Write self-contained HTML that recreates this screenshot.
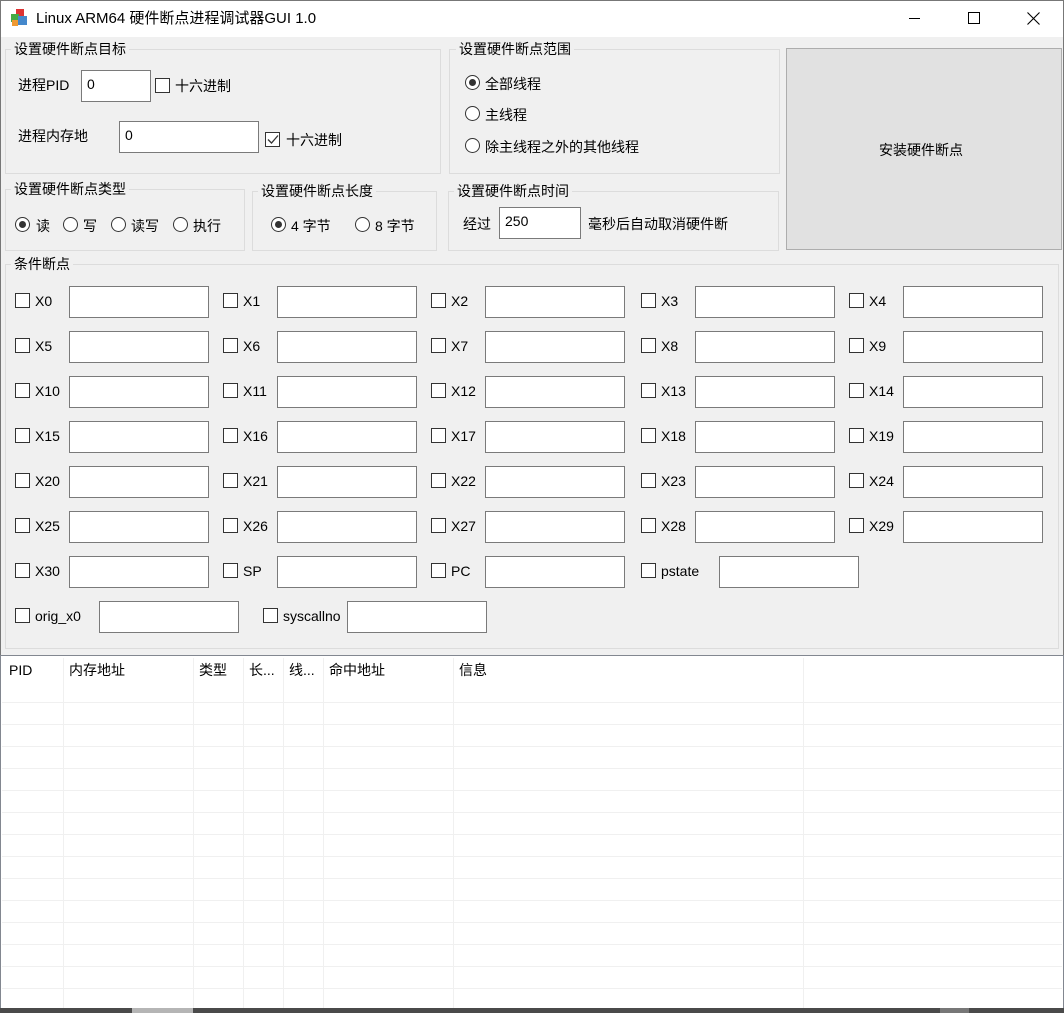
<!DOCTYPE html>
<html><head><meta charset="utf-8"><style>
*{box-sizing:border-box;margin:0;padding:0}
body{width:1064px;height:1013px;background:#f0f0f0;font-family:"Liberation Sans","Noto Sans CJK SC",sans-serif;font-size:14px;color:#000;position:relative;overflow:hidden}
.a{position:absolute;white-space:nowrap;line-height:18px}
.g{position:absolute;border:1px solid #dcdcdc}
.gl{position:absolute;background:#f0f0f0;padding:0 3px;line-height:18px;white-space:nowrap}
.in{position:absolute;background:#fff;border:1px solid #7a7a7a;height:32px;width:140px;padding:4px 5px 0;line-height:18px}
.cb{position:absolute;width:15px;height:15px;border:1px solid #333;background:#fff}
.rb{position:absolute;width:15px;height:15px;border:1px solid #333;border-radius:50%;background:#fff}
.rb.on::after{content:"";position:absolute;left:3px;top:3px;width:7px;height:7px;border-radius:50%;background:#333}
.vl{position:absolute;top:658px;bottom:5px;width:1px;background:#f0f0f0}
.hl{position:absolute;left:2px;right:2px;height:1px;background:#f0f0f0}
</style></head><body>
<div style="position:absolute;left:0;top:0;width:1064px;height:37px;background:#fff;border:1px solid #777;border-bottom:none"></div>
<svg class="a" style="left:10px;top:8px" width="19" height="20" viewBox="0 0 19 20"><rect x="6" y="1" width="8" height="8" fill="#d33"/><rect x="1" y="6" width="8" height="8" fill="#4a4"/><rect x="8" y="8" width="9" height="9" fill="#48c"/><rect x="2" y="12" width="6" height="6" fill="#e93"/></svg>
<div class="a" style="left:36px;top:10px;font-size:15px">Linux ARM64 硬件断点进程调试器GUI 1.0</div>
<div class="a" style="left:909px;top:18px;width:11px;height:1px;background:#000"></div>
<div class="a" style="left:968px;top:12px;width:12px;height:12px;border:1px solid #000"></div>
<svg class="a" style="left:1027px;top:12px" width="13" height="13"><path d="M0.5 0.5L12.5 12.5M12.5 0.5L0.5 12.5" stroke="#000" stroke-width="1.1"/></svg>
<div style="position:absolute;left:0;top:37px;width:1px;height:976px;background:#777"></div>
<div style="position:absolute;right:0;top:37px;width:1px;height:976px;background:#777"></div>

<div class="g" style="left:5px;top:49px;width:436px;height:125px"></div><div class="gl" style="left:11px;top:40px">设置硬件断点目标</div>
<div class="a" style="left:18px;top:76px">进程PID</div>
<div class="in" style="left:81px;top:70px;width:70px">0</div>
<div class="cb" style="left:155px;top:78px"></div><div class="a" style="left:175px;top:77px">十六进制</div>
<div class="a" style="left:18px;top:127px">进程内存地</div>
<div class="in" style="left:119px;top:121px">0</div>
<div class="cb" style="left:265px;top:132px"></div>
<svg class="a" style="left:267px;top:134px" width="12" height="11"><path d="M1 5.5L4.5 9L11 1.5" stroke="#333" fill="none" stroke-width="1.3"/></svg>
<div class="a" style="left:286px;top:131px">十六进制</div>

<div class="g" style="left:449px;top:49px;width:331px;height:125px"></div><div class="gl" style="left:456px;top:40px">设置硬件断点范围</div>
<div class="rb on" style="left:465px;top:75px"></div><div class="a" style="left:485px;top:75px">全部线程</div>
<div class="rb" style="left:465px;top:106px"></div><div class="a" style="left:485px;top:106px">主线程</div>
<div class="rb" style="left:465px;top:138px"></div><div class="a" style="left:485px;top:138px">除主线程之外的其他线程</div>

<div style="position:absolute;left:786px;top:48px;width:276px;height:202px;background:#e1e1e1;border:1px solid #adadad"></div>
<div class="a" style="left:879px;top:141px">安装硬件断点</div>

<div class="g" style="left:5px;top:189px;width:240px;height:62px"></div><div class="gl" style="left:11px;top:180px">设置硬件断点类型</div>
<div class="rb on" style="left:15px;top:217px"></div><div class="a" style="left:36px;top:217px">读</div>
<div class="rb" style="left:63px;top:217px"></div><div class="a" style="left:83px;top:217px">写</div>
<div class="rb" style="left:111px;top:217px"></div><div class="a" style="left:131px;top:217px">读写</div>
<div class="rb" style="left:173px;top:217px"></div><div class="a" style="left:193px;top:217px">执行</div>

<div class="g" style="left:252px;top:191px;width:185px;height:60px"></div><div class="gl" style="left:258px;top:182px">设置硬件断点长度</div>
<div class="rb on" style="left:271px;top:217px"></div><div class="a" style="left:291px;top:217px">4 字节</div>
<div class="rb" style="left:355px;top:217px"></div><div class="a" style="left:375px;top:217px">8 字节</div>

<div class="g" style="left:448px;top:191px;width:331px;height:60px"></div><div class="gl" style="left:454px;top:182px">设置硬件断点时间</div>
<div class="a" style="left:463px;top:215px">经过</div>
<div class="in" style="left:499px;top:207px;width:82px">250</div>
<div class="a" style="left:588px;top:215px">毫秒后自动取消硬件断</div>

<div class="g" style="left:5px;top:264px;width:1054px;height:385px"></div><div class="gl" style="left:11px;top:255px">条件断点</div>

<div class="cb" style="left:15px;top:293px"></div><div class="a" style="left:35px;top:292px">X0</div><div class="in" style="left:69px;top:286px"></div>
<div class="cb" style="left:223px;top:293px"></div><div class="a" style="left:243px;top:292px">X1</div><div class="in" style="left:277px;top:286px"></div>
<div class="cb" style="left:431px;top:293px"></div><div class="a" style="left:451px;top:292px">X2</div><div class="in" style="left:485px;top:286px"></div>
<div class="cb" style="left:641px;top:293px"></div><div class="a" style="left:661px;top:292px">X3</div><div class="in" style="left:695px;top:286px"></div>
<div class="cb" style="left:849px;top:293px"></div><div class="a" style="left:869px;top:292px">X4</div><div class="in" style="left:903px;top:286px"></div>

<div class="cb" style="left:15px;top:338px"></div><div class="a" style="left:35px;top:337px">X5</div><div class="in" style="left:69px;top:331px"></div>
<div class="cb" style="left:223px;top:338px"></div><div class="a" style="left:243px;top:337px">X6</div><div class="in" style="left:277px;top:331px"></div>
<div class="cb" style="left:431px;top:338px"></div><div class="a" style="left:451px;top:337px">X7</div><div class="in" style="left:485px;top:331px"></div>
<div class="cb" style="left:641px;top:338px"></div><div class="a" style="left:661px;top:337px">X8</div><div class="in" style="left:695px;top:331px"></div>
<div class="cb" style="left:849px;top:338px"></div><div class="a" style="left:869px;top:337px">X9</div><div class="in" style="left:903px;top:331px"></div>

<div class="cb" style="left:15px;top:383px"></div><div class="a" style="left:35px;top:382px">X10</div><div class="in" style="left:69px;top:376px"></div>
<div class="cb" style="left:223px;top:383px"></div><div class="a" style="left:243px;top:382px">X11</div><div class="in" style="left:277px;top:376px"></div>
<div class="cb" style="left:431px;top:383px"></div><div class="a" style="left:451px;top:382px">X12</div><div class="in" style="left:485px;top:376px"></div>
<div class="cb" style="left:641px;top:383px"></div><div class="a" style="left:661px;top:382px">X13</div><div class="in" style="left:695px;top:376px"></div>
<div class="cb" style="left:849px;top:383px"></div><div class="a" style="left:869px;top:382px">X14</div><div class="in" style="left:903px;top:376px"></div>

<div class="cb" style="left:15px;top:428px"></div><div class="a" style="left:35px;top:427px">X15</div><div class="in" style="left:69px;top:421px"></div>
<div class="cb" style="left:223px;top:428px"></div><div class="a" style="left:243px;top:427px">X16</div><div class="in" style="left:277px;top:421px"></div>
<div class="cb" style="left:431px;top:428px"></div><div class="a" style="left:451px;top:427px">X17</div><div class="in" style="left:485px;top:421px"></div>
<div class="cb" style="left:641px;top:428px"></div><div class="a" style="left:661px;top:427px">X18</div><div class="in" style="left:695px;top:421px"></div>
<div class="cb" style="left:849px;top:428px"></div><div class="a" style="left:869px;top:427px">X19</div><div class="in" style="left:903px;top:421px"></div>

<div class="cb" style="left:15px;top:473px"></div><div class="a" style="left:35px;top:472px">X20</div><div class="in" style="left:69px;top:466px"></div>
<div class="cb" style="left:223px;top:473px"></div><div class="a" style="left:243px;top:472px">X21</div><div class="in" style="left:277px;top:466px"></div>
<div class="cb" style="left:431px;top:473px"></div><div class="a" style="left:451px;top:472px">X22</div><div class="in" style="left:485px;top:466px"></div>
<div class="cb" style="left:641px;top:473px"></div><div class="a" style="left:661px;top:472px">X23</div><div class="in" style="left:695px;top:466px"></div>
<div class="cb" style="left:849px;top:473px"></div><div class="a" style="left:869px;top:472px">X24</div><div class="in" style="left:903px;top:466px"></div>

<div class="cb" style="left:15px;top:518px"></div><div class="a" style="left:35px;top:517px">X25</div><div class="in" style="left:69px;top:511px"></div>
<div class="cb" style="left:223px;top:518px"></div><div class="a" style="left:243px;top:517px">X26</div><div class="in" style="left:277px;top:511px"></div>
<div class="cb" style="left:431px;top:518px"></div><div class="a" style="left:451px;top:517px">X27</div><div class="in" style="left:485px;top:511px"></div>
<div class="cb" style="left:641px;top:518px"></div><div class="a" style="left:661px;top:517px">X28</div><div class="in" style="left:695px;top:511px"></div>
<div class="cb" style="left:849px;top:518px"></div><div class="a" style="left:869px;top:517px">X29</div><div class="in" style="left:903px;top:511px"></div>

<div class="cb" style="left:15px;top:563px"></div><div class="a" style="left:35px;top:562px">X30</div><div class="in" style="left:69px;top:556px"></div>
<div class="cb" style="left:223px;top:563px"></div><div class="a" style="left:243px;top:562px">SP</div><div class="in" style="left:277px;top:556px"></div>
<div class="cb" style="left:431px;top:563px"></div><div class="a" style="left:451px;top:562px">PC</div><div class="in" style="left:485px;top:556px"></div>
<div class="cb" style="left:641px;top:563px"></div><div class="a" style="left:661px;top:562px">pstate</div><div class="in" style="left:719px;top:556px"></div>

<div class="cb" style="left:15px;top:608px"></div><div class="a" style="left:35px;top:607px">orig_x0</div><div class="in" style="left:99px;top:601px"></div>
<div class="cb" style="left:263px;top:608px"></div><div class="a" style="left:283px;top:607px">syscallno</div><div class="in" style="left:347px;top:601px"></div>

<div style="position:absolute;left:0;top:655px;width:1064px;height:358px;background:#fff;border:1px solid #828790"></div>
<div class="vl" style="left:63px"></div><div class="vl" style="left:193px"></div><div class="vl" style="left:243px"></div><div class="vl" style="left:283px"></div><div class="vl" style="left:323px"></div><div class="vl" style="left:453px"></div><div class="vl" style="left:803px"></div>
<div class="hl" style="top:702px"></div><div class="hl" style="top:724px"></div><div class="hl" style="top:746px"></div><div class="hl" style="top:768px"></div><div class="hl" style="top:790px"></div><div class="hl" style="top:812px"></div><div class="hl" style="top:834px"></div><div class="hl" style="top:856px"></div><div class="hl" style="top:878px"></div><div class="hl" style="top:900px"></div><div class="hl" style="top:922px"></div><div class="hl" style="top:944px"></div><div class="hl" style="top:966px"></div><div class="hl" style="top:988px"></div>
<div class="a" style="left:9px;top:661px">PID</div>
<div class="a" style="left:69px;top:661px">内存地址</div>
<div class="a" style="left:199px;top:661px">类型</div>
<div class="a" style="left:249px;top:661px">长...</div>
<div class="a" style="left:289px;top:661px">线...</div>
<div class="a" style="left:329px;top:661px">命中地址</div>
<div class="a" style="left:459px;top:661px">信息</div>
<div style="position:absolute;left:0;top:1008px;width:1064px;height:5px;background:#4a4a4a"></div>
<div style="position:absolute;left:132px;top:1008px;width:61px;height:5px;background:#b5b5b5"></div>
<div style="position:absolute;left:940px;top:1008px;width:29px;height:5px;background:#777"></div>
</body></html>
